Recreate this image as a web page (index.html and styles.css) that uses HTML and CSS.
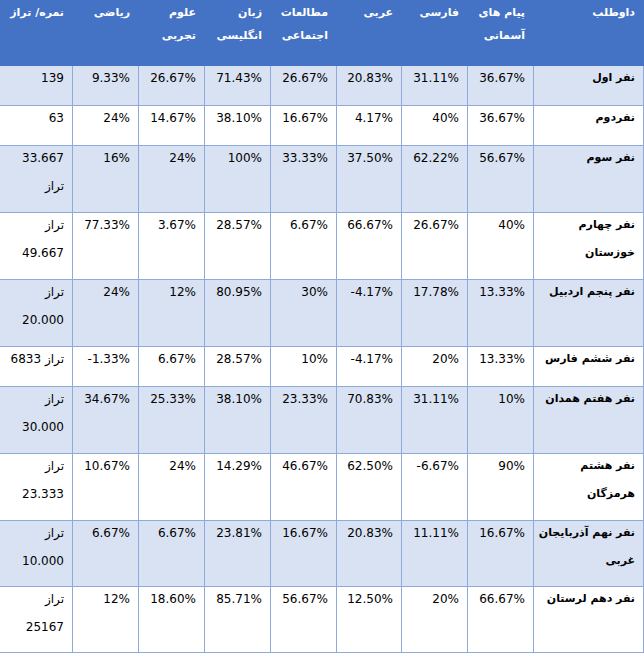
FILE: index.html
```html
<!DOCTYPE html>
<html lang="fa" dir="rtl">
<head>
<meta charset="utf-8">
<title>نتایج</title>
<link rel="stylesheet" href="styles.css">
</head>
<body>
<table class="grid">
  <colgroup>
    <col class="w-name"><col class="w-c"><col class="w-c"><col class="w-c5"><col class="w-c"><col class="w-c"><col class="w-c"><col class="w-c"><col class="w-last">
  </colgroup>
  <thead>
    <tr class="head">
      <th>داوطلب</th>
      <th>پیام های<br>آسمانی</th>
      <th>فارسی</th>
      <th>عربی</th>
      <th>مطالعات<br>اجتماعی</th>
      <th>زبان<br>انگلیسی</th>
      <th>علوم<br>تجربی</th>
      <th>ریاضی</th>
      <th>نمره/ تراز</th>
    </tr>
  </thead>
  <tbody>
    <tr class="one alt"><td class="name">نفر اول</td><td>36.67%</td><td>31.11%</td><td>20.83%</td><td>26.67%</td><td>71.43%</td><td>26.67%</td><td>9.33%</td><td>139</td></tr>
    <tr class="one"><td class="name">نفردوم</td><td>36.67%</td><td>40%</td><td>4.17%</td><td>16.67%</td><td>38.10%</td><td>14.67%</td><td>24%</td><td>63</td></tr>
    <tr class="two alt"><td class="name">نفر سوم</td><td>56.67%</td><td>62.22%</td><td>37.50%</td><td>33.33%</td><td>100%</td><td>24%</td><td>16%</td><td>33.667<span class="l2">تراز</span></td></tr>
    <tr class="two"><td class="name">نفر چهارم<span class="l2">خوزستان</span></td><td>40%</td><td>26.67%</td><td>66.67%</td><td>6.67%</td><td>28.57%</td><td>3.67%</td><td>77.33%</td><td>تراز<span class="l2">49.667</span></td></tr>
    <tr class="two alt"><td class="name">نفر پنجم اردبیل</td><td>13.33%</td><td>17.78%</td><td class="ltr">-4.17%</td><td>30%</td><td>80.95%</td><td>12%</td><td>24%</td><td>تراز<span class="l2">20.000</span></td></tr>
    <tr class="one"><td class="name">نفر ششم فارس</td><td>13.33%</td><td>20%</td><td class="ltr">-4.17%</td><td>10%</td><td>28.57%</td><td>6.67%</td><td class="ltr">-1.33%</td><td>تراز 6833</td></tr>
    <tr class="two alt"><td class="name">نفر هفتم همدان</td><td>10%</td><td>31.11%</td><td>70.83%</td><td>23.33%</td><td>38.10%</td><td>25.33%</td><td>34.67%</td><td>تراز<span class="l2">30.000</span></td></tr>
    <tr class="two"><td class="name">نفر هشتم<span class="l2">هرمزگان</span></td><td>90%</td><td class="ltr">-6.67%</td><td>62.50%</td><td>46.67%</td><td>14.29%</td><td>24%</td><td>10.67%</td><td>تراز<span class="l2">23.333</span></td></tr>
    <tr class="two short alt"><td class="name">نفر نهم آذربایجان<span class="l2">غربی</span></td><td>16.67%</td><td>11.11%</td><td>20.83%</td><td>16.67%</td><td>23.81%</td><td>6.67%</td><td>6.67%</td><td>تراز<span class="l2">10.000</span></td></tr>
    <tr class="two short"><td class="name">نفر دهم لرستان</td><td>66.67%</td><td>20%</td><td>12.50%</td><td>56.67%</td><td>85.71%</td><td>18.60%</td><td>12%</td><td>تراز<span class="l2">25167</span></td></tr>
  </tbody>
</table>
</body>
</html>
```
FILE: styles.css
```css
html, body {
  margin: 0;
  padding: 0;
  background: #ffffff;
}
body {
  font-family: "DejaVu Sans", sans-serif;
  font-size: 12px;
  color: #000;
}
.grid {
  border-collapse: collapse;
  table-layout: fixed;
  width: 644px;
}
.w-name { width: 110px; }
.w-c { width: 66px; }
.w-c5 { width: 65px; }
.w-last { width: 73px; }

.grid th,
.grid td {
  text-align: right;
  vertical-align: top;
  padding: 0 8px 0 4px;
  border: 1px solid #8eaadb;
  overflow: hidden;
  white-space: nowrap;
}
.grid tr > :last-child { border-left: none; }

.head {
  height: 65px;
  background: #4472c4;
}
.head th {
  border-color: #4472c4;
  border-top: none;
  color: #fff;
  font-weight: bold;
  font-size: 11px;
  line-height: 23px;
  padding-top: 1px;
}
.grid td {
  line-height: 22px;
  padding-top: 1px;
}
.l2 {
  display: block;
  margin-top: 6px;
}
.ltr {
  direction: ltr;
}
.grid td.ltr { text-align: right; }
.one { height: 40px; }
.two { height: 67px; }
.two.short { height: 66px; }
.alt { background: #d9e2f3; }
.grid td.name {
  font-weight: bold;
  font-size: 11px;
}
```
